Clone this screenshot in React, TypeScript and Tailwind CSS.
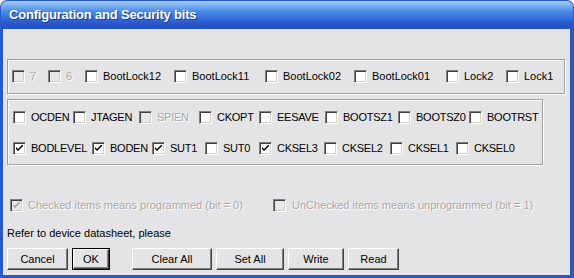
import { ReactNode } from "react";

type Item = { label: string; w: string; checked?: boolean; disabled?: boolean };

const row1: Item[] = [
  { label: "7", w: "w-[36px]", disabled: true },
  { label: "6", w: "w-[37px]", disabled: true },
  { label: "BootLock12", w: "w-[89px]" },
  { label: "BootLock11", w: "w-[91px]" },
  { label: "BootLock02", w: "w-[89px]" },
  { label: "BootLock01", w: "w-[92px]" },
  { label: "Lock2", w: "w-[60px]" },
  { label: "Lock1", w: "w-[50px]" },
];

const row2: Item[] = [
  { label: "OCDEN", w: "w-[60px]" },
  { label: "JTAGEN", w: "w-[66px]" },
  { label: "SPIEN", w: "w-[60px]", disabled: true },
  { label: "CKOPT", w: "w-[60px]" },
  { label: "EESAVE", w: "w-[66px]" },
  { label: "BOOTSZ1", w: "w-[73px]" },
  { label: "BOOTSZ0", w: "w-[71px]" },
  { label: "BOOTRST", w: "w-[66px]" },
];

const row3: Item[] = [
  { label: "BODLEVEL", w: "w-[79px]", checked: true },
  { label: "BODEN", w: "w-[60px]", checked: true },
  { label: "SUT1", w: "w-[53px]", checked: true },
  { label: "SUT0", w: "w-[54px]" },
  { label: "CKSEL3", w: "w-[65px]", checked: true },
  { label: "CKSEL2", w: "w-[66px]" },
  { label: "CKSEL1", w: "w-[66px]" },
  { label: "CKSEL0", w: "w-[60px]" },
];

function Box({ checked, disabled }: { checked?: boolean; disabled?: boolean }) {
  return (
    <span
      className={`relative w-[13px] h-[13px] shrink-0 border border-t-[#808080] border-l-[#808080] border-b-white border-r-white shadow-[inset_1px_1px_0_#404040,inset_-1px_-1px_0_#d4d0c8] ${
        disabled ? "bg-[#e8e8ea]" : "bg-white"
      }`}
    >
      {checked && (
        <svg className="absolute left-[2px] top-[2px]" width="7" height="7" viewBox="0 0 7 7">
          <path d="M0 2 L0 4 L2 6 L7 1 L7 -1 L2 4 Z" fill={disabled ? "#a0a0a0" : "#000"} />
        </svg>
      )}
    </span>
  );
}

function Check({ item, tight }: { item: Item; tight?: boolean }) {
  return (
    <div className={`flex items-center shrink-0 ${item.w}`}>
      <Box checked={item.checked} disabled={item.disabled} />
      <span
        className={`ml-[5px] whitespace-nowrap ${tight ? "tracking-[-0.25px]" : ""} ${
          item.disabled ? "text-[#a8a8a8] [text-shadow:1px_1px_0_#fff]" : "text-black"
        }`}
      >
        {item.label}
      </span>
    </div>
  );
}

function Btn({ w, def, children }: { w: string; def?: boolean; children: ReactNode }) {
  return (
    <div className={`${w} h-[22px] shrink-0 ${def ? "border border-black" : ""}`}>
      <div className="w-full h-full flex items-center justify-center border border-t-white border-l-white border-b-[#404040] border-r-[#404040] shadow-[inset_-1px_-1px_0_#808080] bg-[#e4e4e6] text-black">
        {children}
      </div>
    </div>
  );
}

export default function App() {
  return (
    <div className="w-[574px] h-[278px] flex flex-col bg-white font-['Liberation_Sans',Arial,sans-serif] text-[11px] leading-[13px]">
      {/* Title bar */}
      <div className="h-[29px] shrink-0 rounded-t-[7px] flex items-center pl-[8px] bg-[linear-gradient(to_bottom,#a6c9f6_0%,#78aef0_18%,#4a8ae8_38%,#3470dc_60%,#2858cc_80%,#2450c2_100%)] border-t border-x border-[#2a5ad0]">
        <span className="text-white font-bold text-[13px] leading-[16px] tracking-[-0.2px] [text-shadow:1px_1px_0_#1a3a90]">
          Configuration and Security bits
        </span>
      </div>

      {/* Body */}
      <div className="flex-1 flex flex-col border-l-[3px] border-r-[4px] border-b-[3px] border-[#2a58c8] bg-[#e4e4e6] pl-[4px]">
        {/* Lock bits group */}
        <div className="mt-[30px] w-[558px] h-[35px] flex items-center pl-[4px] border border-[#a0a0a0] shadow-[inset_1px_1px_0_#fff,1px_1px_0_#fff]">
          {row1.map((it) => (
            <Check key={it.label} item={it} />
          ))}
        </div>

        {/* Fuse bits group */}
        <div className="mt-[5px] w-[536px] h-[66px] flex flex-col pt-[11px] gap-[18px] pl-[5px] border border-[#a0a0a0] shadow-[inset_1px_1px_0_#fff,1px_1px_0_#fff]">
          <div className="flex">
            {row2.map((it) => (
              <Check key={it.label} item={it} tight />
            ))}
          </div>
          <div className="flex">
            {row3.map((it) => (
              <Check key={it.label} item={it} tight />
            ))}
          </div>
        </div>

        {/* Legend */}
        <div className="mt-[34px] ml-[3px] flex">
          <div className="w-[263px] flex items-center">
            <Box checked disabled />
            <span className="ml-[5px] text-[#a8a8a8] [text-shadow:1px_1px_0_#fff] whitespace-nowrap">
              Checked items means programmed (bit = 0)
            </span>
          </div>
          <div className="flex items-center">
            <Box disabled />
            <span className="ml-[6px] text-[#a8a8a8] [text-shadow:1px_1px_0_#fff] whitespace-nowrap">
              UnChecked items means unprogrammed (bit = 1)
            </span>
          </div>
        </div>

        <div className="mt-[15px] text-black whitespace-nowrap">Refer to device datasheet, please</div>

        {/* Buttons */}
        <div className="mt-[8px] flex">
          <Btn w="w-[61px]">Cancel</Btn>
          <div className="ml-[4px]">
            <Btn w="w-[38px]" def>
              OK
            </Btn>
          </div>
          <div className="ml-[22px]">
            <Btn w="w-[80px]">Clear All</Btn>
          </div>
          <div className="ml-[4px]">
            <Btn w="w-[68px]">Set All</Btn>
          </div>
          <div className="ml-[4px]">
            <Btn w="w-[56px]">Write</Btn>
          </div>
          <div className="ml-[4px]">
            <Btn w="w-[51px]">Read</Btn>
          </div>
        </div>
      </div>
    </div>
  );
}
